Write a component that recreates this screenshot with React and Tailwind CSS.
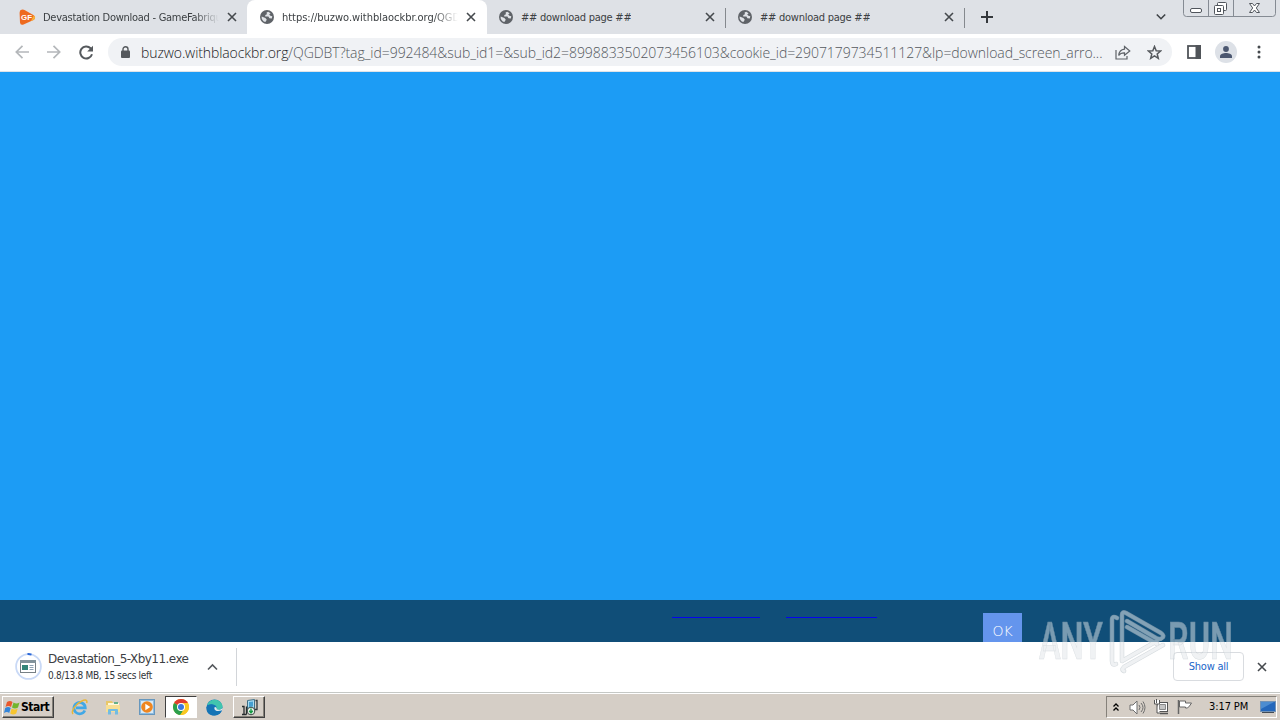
import React from 'react'

const CloseX = ({ className = '' }) => (
  <svg className={`shrink-0 ${className}`} width="10" height="10" viewBox="0 0 10 10" stroke="#45494d" strokeWidth="1.6">
    <path d="M1 1l8 8M9 1l-8 8" />
  </svg>
)

const Globe = () => (
  <svg className="shrink-0" width="14" height="14" viewBox="0 0 14 14">
    <circle cx="7" cy="7" r="7" fill="#5f6368" />
    <path d="M8.2 1.7L6.6 2.6 6.9 4.2 5.3 4.9 5.2 6.4 8.4 6.6 9.4 8.2 11.8 8.4 12.3 6.3 10.4 5.7 9.2 4.6 10.6 3.2z" fill="#dfe2e6" />
    <path d="M1.6 6.4l3.8 1.7 1.4 1.7-1.4 2.3C3 11.400 1.200 9 1.600 6.400z" fill="#dfe2e6" />
  </svg>
)

const GameFab = () => (
  <svg className="-mr-px shrink-0" width="17" height="17" viewBox="0 0 17 17">
    <path d="M2.500 .8Q.5 1 .6 4L1 13.500Q1.300 16.500 4 15.700L14.500 11Q17.500 9 14.800 6.300L5.500 1Q4 .3 2.500 .8z" fill="#ee6a1f" />
    <path d="M3 15.800L14.500 11Q17.500 9 14.800 6.300L12 12z" fill="#f7b23b" />
    <text x="2" y="11.300" fontSize="8" fontWeight="700" fontFamily="Liberation Sans, sans-serif" fill="#fff" textLength="11" lengthAdjust="spacingAndGlyphs">GF</text>
  </svg>
)

function Tab({ icon, title, width, text, active, line, close = 'right-[11px]' }) {
  return (
    <div className={`relative flex h-[34px] shrink-0 items-center ${width} ${active ? 'rounded-t-lg bg-white pl-[13px]' : 'pl-3'}`}>
      {icon}
      <span className={`ml-2 overflow-hidden whitespace-nowrap pt-[2px] text-[11px] text-[#3c4043] ${text}`}>{title}</span>
      <CloseX className={`absolute top-3 ${close}`} />
      {line && <i className="absolute right-0 top-2 h-5 w-px bg-[#85898e]" />}
    </div>
  )
}

function TabStrip() {
  return (
    <div className="relative flex h-[34px] bg-[#dee1e6]">
      <div className="w-[7px] shrink-0" />
      <Tab width="w-[240px]" close="right-[10px]" icon={<GameFab />} title="Devastation Download - GameFabrique" text="w-[176px] tracking-[-0.27px] [mask-image:linear-gradient(to_right,#000_86%,transparent)]" />
      <Tab width="w-[240px]" active icon={<Globe />} title="https://buzwo.withblaockbr.org/QGDBT" text="w-[176px] tracking-[-0.02px] [mask-image:linear-gradient(to_right,#000_86%,transparent)]" />
      <Tab width="w-[239px]" line icon={<Globe />} title="## download page ##" text="tracking-[-0.25px]" />
      <Tab width="w-[239px]" line icon={<Globe />} title="## download page ##" text="tracking-[-0.25px]" />
      <svg className="ml-4 mt-[11px]" width="12" height="12" viewBox="0 0 12 12" stroke="#34383c" strokeWidth="2"><path d="M6 0v12M0 6h12" /></svg>
      <svg className="ml-auto mr-[114px] mt-[13px]" width="10" height="8" viewBox="0 0 10 8" fill="none" stroke="#3f4347" strokeWidth="1.600"><path d="M.8 1.500L5 5.700l4.200-4.200" /></svg>
      <svg className="absolute right-[3px] top-0" width="94" height="18" viewBox="0 0 94 18" fill="none" stroke="#858b93">
        <path d="M.5 0v13.500q0 3 3 3h86q3 0 3-3V0M25.500 0v16.500M50.500 0v16.500" />
        <g stroke="#50555c">
          <rect x="7.500" y="8.500" width="11" height="4" rx="1.500" fill="#fff" />
          <rect x="34.500" y="2.500" width="9" height="8" rx="1" fill="#fff" />
          <rect x="31.500" y="5.500" width="9" height="9" rx="1" fill="#fff" />
          <rect x="34.500" y="8.500" width="3" height="3" />
          <path d="M66.500 3.500h3l2 2.500 2-2.500h3l-3.200 4.500 3.200 4.500h-3l-2-2.500-2 2.500h-3l3.200-4.500z" fill="#fff" />
        </g>
      </svg>
    </div>
  )
}

function Toolbar() {
  return (
    <div className="flex h-[38px] items-center border-b border-[#dfe3e8] bg-white pb-px">
      <svg className="ml-[15px]" width="14" height="14" viewBox="0 0 14 14" fill="none" stroke="#b4b7ba" strokeWidth="1.700"><path d="M14 7H1.500M7.500 .8L1.300 7l6.200 6.200" /></svg>
      <svg className="ml-[18px]" width="14" height="14" viewBox="0 0 14 14" fill="none" stroke="#b4b7ba" strokeWidth="1.700"><path d="M0 7h12.500M6.500 .8L12.700 7l-6.200 6.200" /></svg>
      <svg className="ml-[18px]" width="15" height="15" viewBox="0 0 15 15" fill="none" stroke="#55595d" strokeWidth="2"><path d="M13 9.300A6 6 0 1 1 11.600 3.300L13 4.700" /><path d="M14 .7v5.800H8.200z" fill="#55595d" stroke="none" /></svg>
      <div className="ml-[14px] flex h-7 w-[1064px] items-center rounded-full bg-[#f0f2f5]">
        <svg className="ml-[13px] shrink-0" width="9" height="12" viewBox="0 0 9 12"><path d="M2 5V3.200a2.500 2.500 0 0 1 5 0V5" fill="none" stroke="#55595d" strokeWidth="1.400" /><rect y="4.500" width="9" height="7.500" rx="1" fill="#55595d" /></svg>
        <div className="ml-[11px] w-[970px] shrink-0 whitespace-nowrap font-['Open_Sans',sans-serif] text-[14px] font-light tracking-[-0.055px] text-[#54585d]">
          <span className="tracking-[-0.1px] text-[#202124]">buzwo.withblaockbr.org</span>/QGDBT?tag_id=992484&amp;sub_id1=&amp;sub_id2=8998833502073456103&amp;cookie_id=2907179734511127&amp;lp=download_screen_arro...
        </div>
        <svg className="ml-1 shrink-0" width="16" height="15" viewBox="0 0 16 15" fill="none" stroke="#5f6368" strokeWidth="1.200"><path d="M1 5v9h11v-3" /><path d="M9.500 1.500L14.800 6 9.500 10.300V7.800C7 7.700 5 8.500 3.700 10.500 4 7 6 4.500 9.500 4.100z" /></svg>
        <svg className="ml-4 shrink-0" width="15" height="15" viewBox="0 0 15 15" fill="none" stroke="#55595d" strokeWidth="1.500"><path d="M7.500 1.500l1.700 4.200 4.400.3-3.400 2.900 1.100 4.400-3.800-2.400-3.800 2.400 1.100-4.400L1.400 6l4.400-.3z" /></svg>
      </div>
      <svg className="ml-[15px]" width="14" height="14" viewBox="0 0 14 14"><rect x="1" y="1" width="12" height="12" fill="#fff" stroke="#505459" strokeWidth="1.800" /><path d="M8.500 0H14v14H8.500z" fill="#505459" /></svg>
      <div className="ml-[14px] flex h-[22px] w-[22px] items-center justify-center rounded-full bg-[#dde1e7]">
        <svg width="12" height="12" viewBox="0 0 12 12" fill="#4b5770"><circle cx="6" cy="3" r="2.900" /><path d="M0 12v-1.800C0 8 3.500 7 6 7s6 1 6 3.200V12z" /></svg>
      </div>
      <svg className="ml-5" width="4" height="14" viewBox="0 0 4 14" fill="#45494d"><circle cx="2" cy="2" r="1.500" /><circle cx="2" cy="7" r="1.500" /><circle cx="2" cy="12" r="1.500" /></svg>
    </div>
  )
}

function Page() {
  return (
    <>
      <div className="h-[528px] bg-[#1c9cf5]" />
      <div className="flex h-[42px] bg-[#104e78]">
        <div className="ml-[672px] mt-[17px] h-px w-[88px] bg-[#0505ee]" />
        <div className="ml-[26px] mt-[17px] h-px w-[91px] bg-[#0505ee]" />
        <div className="ml-[106px] mt-[13px] flex h-[29px] w-[39px] justify-center bg-[#6495ed] pt-[9px] font-['DejaVu_Sans',sans-serif] text-[14px] font-extralight leading-[18px] text-white">OK</div>
      </div>
    </>
  )
}

function DownloadShelf() {
  return (
    <div className="flex h-[51px] items-center border-b border-[#c5c8c5] bg-white pb-px">
      <svg className="ml-[15px] shrink-0" width="27" height="27" viewBox="0 0 27 27">
        <circle cx="13.500" cy="13.500" r="12.400" fill="none" stroke="#c9d9f6" strokeWidth="1.800" />
        <path d="M12.500 1.100A12.400 12.400 0 0 1 16.500 1.600" fill="none" stroke="#2866d8" strokeWidth="2" />
        <rect x="5.500" y="7.500" width="15" height="12" fill="#fff" stroke="#778085" />
        <path d="M5 7h16v3H5z" fill="#82939b" /><path d="M7 12h6v5H7z" fill="#338579" />
        <path d="M14.500 12.500h4M14.500 14.500h4M14.500 16.500h4" stroke="#8da1b2" />
      </svg>
      <div className="ml-[6px] mt-[2px] w-[145px] whitespace-nowrap text-[#3c4043]">
        <div className="font-['DejaVu_Sans',sans-serif] text-[12px] leading-4 tracking-[-0.55px]">Devastation_5-Xby11.exe</div>
        <div className="mt-[1px] text-[10px] leading-4 tracking-[-0.3px] text-[#303438]">0.8/13.8 MB, 15 secs left</div>
      </div>
      <svg className="ml-[14px] shrink-0" width="11" height="8" viewBox="0 0 11 8" fill="none" stroke="#55595d" strokeWidth="1.600"><path d="M1 6.500L5.500 2 10 6.500" /></svg>
      <div className="ml-[18px] h-[38px] w-px bg-[#d2d5d9]" />
      <button className="ml-auto mr-[13px] h-[29px] w-[71px] rounded-[4px] border border-[#d9dce0] pt-px text-[11px] tracking-[-0.25px] text-[#1b66c9]">Show all</button>
      <CloseX className="mr-[13px]" />
    </div>
  )
}

function StartFlag() {
  return (
    <svg className="shrink-0" width="16" height="15" viewBox="0 0 16 15">
      <path d="M3 2q3-2 5.500 0L7 7Q4.500 5 1.500 7z" fill="#e9582c" />
      <path d="M9.500 2.500q3 1.800 6 0L14 7.500q-3 1.800-6 0z" fill="#72b52c" />
      <path d="M1.200 8q3-2 5.500 0L5.200 13Q3 11 0 13z" fill="#3385d9" />
      <path d="M7.700 8.500q3 1.800 6 0l-1.500 5q-3 1.800-6 0z" fill="#f7c52e" />
    </svg>
  )
}

function Taskbar() {
  const raised = 'border border-white border-r-[#404040] border-b-[#404040] shadow-[inset_-1px_-1px_0_#848078]'
  return (
    <div className="flex h-[27px] items-center border-t border-white bg-[#d5cec6]">
      <div className={`ml-[2px] flex h-[22px] w-[52px] items-center pl-px ${raised}`}>
        <StartFlag />
        <span className="ml-px font-['DejaVu_Sans_Condensed','DejaVu_Sans',sans-serif] text-[12px] font-bold tracking-[-0.5px] text-black">Start</span>
      </div>
      <svg className="ml-[17px] shrink-0" width="17" height="17" viewBox="0 0 17 17" fill="none">
        <path d="M13.800 11.500A5.700 5.700 0 1 1 14.300 8.800H5" stroke="#41a8e6" strokeWidth="2.700" />
        <path d="M2 15C-.5 12 5 5 10 2.500S16.500 1 15.700 4" stroke="#e8b638" strokeWidth="1.500" />
      </svg>
      <svg className="ml-[17px] shrink-0" width="16" height="16" viewBox="0 0 16 16">
        <path d="M1 2h6l1 2h6v9H1z" fill="#e8c769" /><path d="M3 4h11v4H3z" fill="#fff8d9" /><path d="M1 6h14v7H1z" fill="#f7df94" />
        <path d="M3 15.500V11q0-1 1-1h8q1 0 1 1v4.500h-3V12H6v3.500z" fill="#72bce2" /><path d="M9 3h4v2H9z" fill="#66b08a" />
      </svg>
      <svg className="ml-[18px] shrink-0" width="17" height="17" viewBox="0 0 17 17">
        <rect x=".5" y=".5" width="15" height="15" fill="#8dbce1" stroke="#6797bd" /><rect x="2" y="2" width="12" height="12" fill="#d8e9f5" />
        <circle cx="8" cy="8" r="5.800" fill="#ef8620" /><path d="M6.300 4.800L11.300 8l-5 3.200z" fill="#fff" />
      </svg>
      <div className="ml-[9px] flex h-[22px] w-[32px] items-center justify-center border border-[#404040] border-b-white border-r-white bg-white">
        <svg width="16" height="16" viewBox="0 0 16 16">
          <circle cx="8" cy="8" r="8" fill="#f9c722" />
          <path d="M8 8L1.070 4A8 8 0 0 1 14.930 4z" fill="#df3c2f" />
          <path d="M8 8L1.070 4A8 8 0 0 0 7.300 16L11 10z" fill="#2b9f4c" />
          <path d="M8 4h6.930A8 8 0 0 1 7.300 16L11.400 10z" fill="#f9c722" />
          <circle cx="8" cy="8" r="4" fill="#fff" /><circle cx="8" cy="8" r="3" fill="#3978df" />
        </svg>
      </div>
      <svg className="ml-[9px] shrink-0" width="17" height="17" viewBox="0 0 17 17">
        <circle cx="8.500" cy="8.500" r="8" fill="#1678bd" />
        <path d="M1 6C4-1 14-1 16.500 6.500c.5 4-3.500 5-6.500 4 2-3-1-5-4-5-2 0-4 .5-5 .5z" fill="#41c5ae" />
        <path d="M.5 8C3 4 9 5 9 8c-3 2-.5 6 6.500 4.500C11 19-.5 17.500.5 8z" fill="#1574b5" />
        <path d="M8.800 8c-1.200 2 .5 4 3.200 4l3.500-.5q1-1 1-2.500c-1.500 2-4 2-6 1.300.8-1 0-2-1.700-2.300z" fill="#e4eceb" />
      </svg>
      <div className={`ml-[10px] flex h-[22px] w-[32px] items-center justify-center ${raised}`}>
        <svg width="17" height="17" viewBox="0 0 17 17">
          <path d="M6.500 1.500l7-1v9l-7 1z" fill="#a9dcf2" stroke="#3f6e85" />
          <path d="M8 3l4-.5v5L8 8z" fill="#459fd0" />
          <path d="M14.500 1.500h1.500v9h-3" fill="none" stroke="#30383b" strokeWidth="1.300" />
          <path d="M1 7.500h2v8M1 15.500h4.500M5.500 7.500v8" fill="none" stroke="#272c2e" strokeWidth="1.300" />
          <circle cx="10" cy="12" r="3.800" fill="#f2f7f1" stroke="#394843" />
          <path d="M10 9.500v4M8.200 11.700l1.800 2.100 1.800-2.100" fill="none" stroke="#199b45" strokeWidth="1.400" />
        </svg>
      </div>
      <div className="ml-auto mr-[3px] flex h-[22px] w-[171px] items-center border border-[#85817a] border-b-white border-r-white">
        <svg className="ml-[6px]" width="6" height="9" viewBox="0 0 6 9" fill="none" stroke="#000" strokeWidth="1.300"><path d="M.5 3.500L3 1l2.500 2.500M.5 7.500L3 5l2.500 2.500" /></svg>
        <svg className="ml-[10px]" width="17" height="15" viewBox="0 0 17 15" fill="none" stroke="#6e6e6e"><path d="M1 5h3l4-4v13l-4-4H1z" fill="#fff" /><path d="M10 5q2 2.500 0 5M12 3q4 4.500 0 9M14 1.500q4 6 0 12" /></svg>
        <svg className="ml-[7px]" width="17" height="16" viewBox="0 0 17 16" fill="none" stroke="#555"><rect x="4.500" y="3.500" width="10" height="9" fill="#fff" /><path d="M6.500 5.500h6v5h-6z" fill="#c4c4c4" stroke="#888" /><path d="M7 14.500h8" strokeWidth="1.500" /><path d="M1.500 1v4h5V1M3.500 0v4M4 5v9h3" fill="#fff" /></svg>
        <svg className="ml-[7px]" width="17" height="16" viewBox="0 0 17 16" fill="#fff" stroke="#666"><path d="M1.500 1v14" strokeWidth="1.500" /><path d="M2.500 2h6v2h6l-2 3-2 2H8.500V8h-6z" /></svg>
        <span className="ml-[15px] whitespace-nowrap pt-px text-[11px] tracking-[-0.1px] text-black">3:17 PM</span>
        <svg className="ml-auto shrink-0" width="16" height="12" viewBox="0 0 16 12"><rect x=".5" y=".5" width="15" height="10" fill="#2467bb" stroke="#7292b5" /><path d="M1 1h13L1 8z" fill="#4c8cd0" /><path d="M2 11.500h12" stroke="#424b55" /></svg>
      </div>
    </div>
  )
}

function Watermark() {
  const bar = 'M81 12Q76 9 76 14V55Q76 60 80 58'
  const play = 'M86 48V9Q86 5 90 7L125 27Q129 30 126 32Q124 34 120 32L91 15M91 21L121 38M86 48V55L121 35M88 65Q85 64 88 61L127 39'
  return (
    <svg className="pointer-events-none absolute left-[1036px] top-[606px]" width="200" height="72" viewBox="0 0 200 72">
      <g opacity=".5" fontFamily="Roboto, sans-serif" fontWeight="600" fontSize="52" fill="#e2e7ea" stroke="#b4bdc4" strokeWidth=".6">
        <text x="3" y="53" textLength="64" lengthAdjust="spacingAndGlyphs">ANY</text>
        <text x="132" y="53" textLength="65" lengthAdjust="spacingAndGlyphs">RUN</text>
      </g>
      <g opacity=".55" fill="none" strokeLinejoin="round" strokeLinecap="round">
        <path d={bar} stroke="#b4bdc4" strokeWidth="4.500" />
        <path d={play} stroke="#b4bdc4" strokeWidth="4.500" />
        <path d={bar} stroke="#e2e7ea" strokeWidth="3.300" />
        <path d={play} stroke="#e2e7ea" strokeWidth="3.300" />
      </g>
    </svg>
  )
}

export default function App() {
  return (
    <div className="relative h-[720px] w-[1280px] overflow-hidden bg-white font-['DejaVu_Sans_Condensed','DejaVu_Sans',sans-serif]">
      <TabStrip />
      <Toolbar />
      <Page />
      <DownloadShelf />
      <Taskbar />
      <Watermark />
    </div>
  )
}
